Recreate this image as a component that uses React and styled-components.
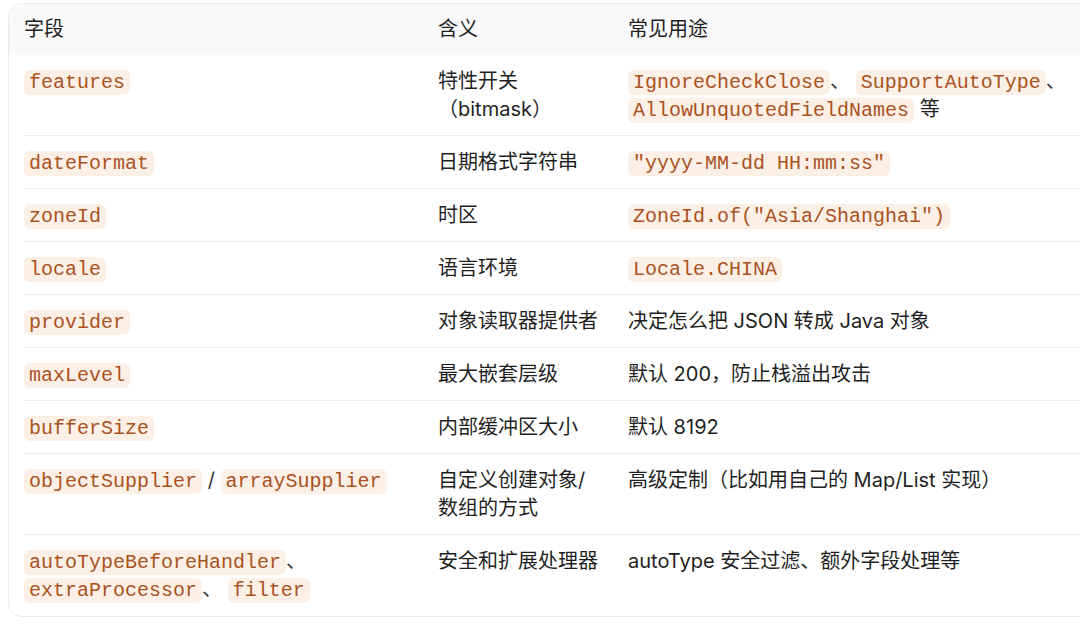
import React from 'react';
import styled, { createGlobalStyle } from 'styled-components';

const GlobalStyle = createGlobalStyle`
    html, body {
        margin: 0;
        padding: 0;
        background: #fff;
        overflow: hidden;
    }
    body {
        font-family: Inter, "Noto Sans CJK SC", sans-serif;
        color: #1f1f1f;
    }
`;

const Page = styled.div`
    padding: 3px 0 0 8px;
    width: 1100px;
`;

const Card = styled.div`
    border: 1px solid #ebebeb;
    border-radius: 14px;
    overflow: hidden;
    background: #fff;
`;

const Grid = styled.div`
    display: grid;
    grid-template-columns: 414px 190px 1fr;
`;

const HeadRow = styled(Grid)`
    background: #f9f9f9;
    padding-left: 15px;
`;

const HeadCell = styled.div`
    font-size: 20px;
    line-height: 28px;
    padding: 11px 16px 12px 0;
    font-weight: 400;
`;

const Body = styled.div`
    padding-left: 15px;
`;

const Row = styled(Grid)`
    border-bottom: 1px solid ${p => (p.last ? 'transparent' : '#ececec')};
`;

const Cell = styled.div`
    font-size: 20px;
    line-height: 28px;
    padding: 12px ${p => p.padRight || 16}px 12px 0;
`;

const Code = styled.code`
    font-family: "Liberation Mono", "DejaVu Sans Mono", monospace;
    font-size: 20px;
    line-height: 20px;
    color: #a9531f;
    background: #fcefe6;
    border-radius: 6px;
    padding: 1px 5px;
    white-space: nowrap;
`;

const Sep = styled.span`
    color: #333;
`;

const rows = [
    {
        field: <Code>features</Code>,
        meaning: '特性开关（bitmask）',
        usage: (
            <>
                <Code>IgnoreCheckClose</Code><Sep>、</Sep> <Code>SupportAutoType</Code><Sep>、</Sep>{' '}
                <Code>AllowUnquotedFieldNames</Code> 等
            </>
        ),
    },
    { field: <Code>dateFormat</Code>, meaning: '日期格式字符串', usage: <Code>"yyyy-MM-dd HH:mm:ss"</Code> },
    { field: <Code>zoneId</Code>, meaning: '时区', usage: <Code>ZoneId.of("Asia/Shanghai")</Code> },
    { field: <Code>locale</Code>, meaning: '语言环境', usage: <Code>Locale.CHINA</Code> },
    { field: <Code>provider</Code>, meaning: '对象读取器提供者', usage: '决定怎么把 JSON 转成 Java 对象' },
    { field: <Code>maxLevel</Code>, meaning: '最大嵌套层级', usage: '默认 200，防止栈溢出攻击' },
    { field: <Code>bufferSize</Code>, meaning: '内部缓冲区大小', usage: '默认 8192' },
    {
        field: (
            <>
                <Code>objectSupplier</Code> <Sep>/</Sep> <Code>arraySupplier</Code>
            </>
        ),
        meaning: '自定义创建对象/数组的方式',
        usage: '高级定制（比如用自己的 Map/List 实现）',
    },
    {
        field: (
            <>
                <Code>autoTypeBeforeHandler</Code><Sep>、</Sep>{' '}
                <Code>extraProcessor</Code><Sep>、</Sep> <Code>filter</Code>
            </>
        ),
        meaning: '安全和扩展处理器',
        usage: 'autoType 安全过滤、额外字段处理等',
    },
];

export default function App() {
    return (
        <Page>
            <GlobalStyle />
            <Card>
                <HeadRow>
                    <HeadCell>字段</HeadCell>
                    <HeadCell>含义</HeadCell>
                    <HeadCell>常见用途</HeadCell>
                </HeadRow>
                <Body>
                    {rows.map((r, i) => (
                        <Row key={i} last={i === rows.length - 1}>
                            <Cell>{r.field}</Cell>
                            <Cell padRight={26}>{r.meaning}</Cell>
                            <Cell>{r.usage}</Cell>
                        </Row>
                    ))}
                </Body>
            </Card>
        </Page>
    );
}
